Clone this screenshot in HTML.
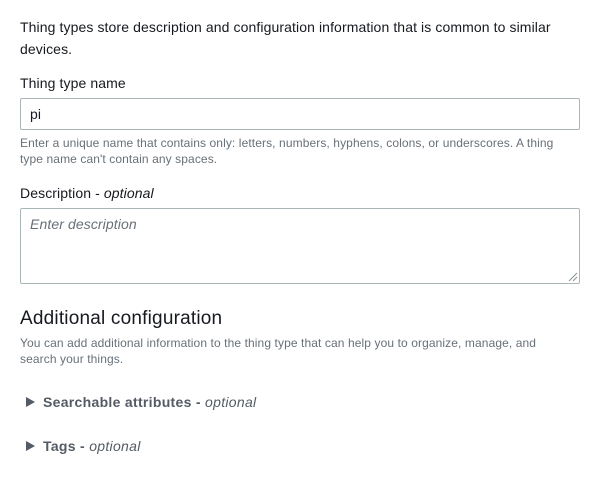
<!DOCTYPE html>
<html><head><meta charset="utf-8"><style>
body{margin:0;width:600px;height:498px;background:#fff;font-family:"Liberation Sans",sans-serif;color:#16191f;position:relative;overflow:hidden}
.a{position:absolute;left:20px;white-space:nowrap}
.p{font-size:14px;line-height:22px;letter-spacing:0.1px}
.h{font-size:12px;line-height:16px;color:#687078;letter-spacing:0.1px}
.box{position:absolute;left:20px;width:558px;border:1px solid #aab7b8;border-radius:2px;background:#fff}
.exp{font-size:14px;font-weight:bold;color:#545b64;letter-spacing:0.3px}
.exp i{font-weight:normal}
.tri{position:absolute;left:26px;width:0;height:0;border-left:9px solid #545b64;border-top:5.5px solid transparent;border-bottom:5.5px solid transparent}
</style></head><body>
<div class="a p" style="top:16px">Thing types store description and configuration information that is common to similar<br>devices.</div>
<div class="a p" style="top:72px">Thing type name</div>
<div class="box" style="top:98px;height:30px"></div>
<div class="a p" style="top:103px;left:30px">pi</div>
<div class="a h" style="top:135px">Enter a unique name that contains only: letters, numbers, hyphens, colons, or underscores. A thing<br>type name can't contain any spaces.</div>
<div class="a p" style="top:182px">Description - <i>optional</i></div>
<div class="box" style="top:208px;height:74px"></div>
<div class="a p" style="top:213px;left:30px;color:#687078"><i>Enter description</i></div>
<svg style="position:absolute;left:568px;top:272px" width="10" height="10"><path d="M9 1L1 9M9 5L5 9" stroke="#879596" stroke-width="1"/></svg>
<div class="a" style="top:306px;font-size:19px;line-height:26px;letter-spacing:0.2px">Additional configuration</div>
<div class="a h" style="top:335px">You can add additional information to the thing type that can help you to organize, manage, and<br>search your things.</div>
<div class="tri" style="top:397px"></div>
<div class="a exp" style="top:393px;left:43px;line-height:18px">Searchable attributes - <i>optional</i></div>
<div class="tri" style="top:441px"></div>
<div class="a exp" style="top:437px;left:43px;line-height:18px">Tags - <i>optional</i></div>
</body></html>
